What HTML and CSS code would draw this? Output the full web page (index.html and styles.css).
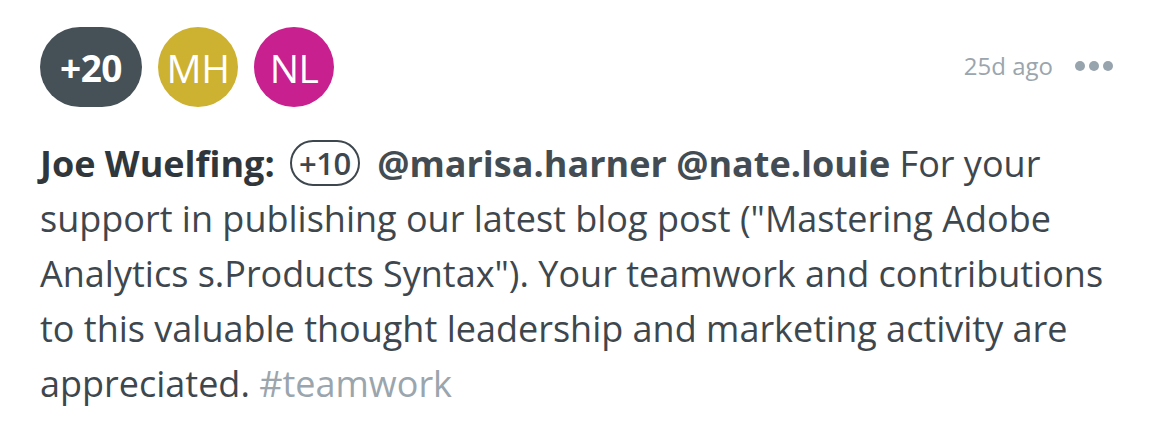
FILE: index.html
```html
<!DOCTYPE html>
<html>
<head>
<meta charset="utf-8">
<link rel="stylesheet" href="styles.css">
</head>
<body>
<div class="card">
  <div class="header">
    <div class="avatars">
      <div class="avatar more">+20</div>
      <div class="avatar mh">MH</div>
      <div class="avatar nl">NL</div>
    </div>
    <div class="meta">
      <span class="time">25d ago</span>
      <span class="dots"><i></i><i></i><i></i></span>
    </div>
  </div>
  <p class="message"><b class="author">Joe Wuelfing:</b> <span class="points">+10</span> <b class="mention">@marisa.harner</b> <b class="mention">@nate.louie</b> For your support in publishing our latest blog post ("Mastering Adobe Analytics s.Products Syntax"). Your teamwork and contributions to this valuable thought leadership and marketing activity are appreciated. <span class="tag">#teamwork</span></p>
</div>
</body>
</html>
```

FILE: styles.css
```css
html, body {
  margin: 0;
  padding: 0;
  background: #ffffff;
}
body {
  font-family: "Open Sans", "Liberation Sans", sans-serif;
  color: #3e474e;
}
.card {
  padding: 27px 40px 0 40px;
}
.header {
  display: flex;
  justify-content: space-between;
  align-items: flex-start;
}
.avatars {
  display: flex;
  gap: 16px;
}
.avatar {
  height: 80px;
  width: 80px;
  border-radius: 40px;
  display: flex;
  align-items: center;
  justify-content: center;
  color: #ffffff;
  font-size: 39px;
  letter-spacing: -0.5px;
}
.avatar.more {
  width: 102px;
  background: #465057;
  font-weight: 700;
  font-size: 37px;
}
.avatar.mh { background: #cdb130; }
.avatar.nl { background: #c8208f; }
.meta {
  display: flex;
  align-items: center;
  gap: 22px;
  margin-top: 22px;
  margin-right: 2px;
}
.time {
  font-size: 24px;
  color: #9ba5ad;
}
.dots {
  display: flex;
  gap: 4px;
}
.dots i {
  display: block;
  width: 10px;
  height: 10px;
  border-radius: 50%;
  background: #97a3ad;
}
.message {
  margin: 29px 0 0 0;
  font-size: 36px;
  line-height: 55px;
}
.author {
  font-weight: 700;
  color: #30373c;
}
.mention {
  font-weight: 700;
  color: #434c53;
}
.points {
  display: inline-block;
  border: 2.5px solid #3e474e;
  border-radius: 24px;
  padding: 0 7px;
  font-size: 31px;
  font-weight: 600;
  line-height: 42px;
  margin: 0 8px 0 6px;
  vertical-align: 2px;
  letter-spacing: -0.5px;
}
.tag {
  color: #9aa5ad;
}
```
